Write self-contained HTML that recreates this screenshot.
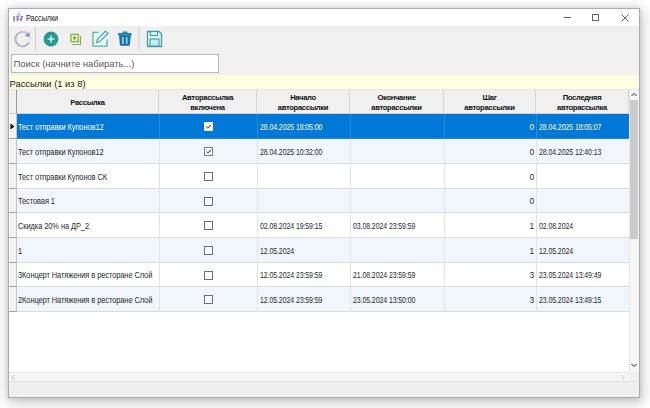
<!DOCTYPE html>
<html><head><meta charset="utf-8">
<style>
*{margin:0;padding:0;box-sizing:border-box}
html,body{width:650px;height:408px;overflow:hidden;background:#fff;font-family:"Liberation Sans",sans-serif}
.abs{position:absolute}
#win{position:absolute;left:8px;top:8px;width:632px;height:390px;border:1px solid #acacac;background:#f0f0f0;box-shadow:0 0 3px rgba(0,0,0,0.1),1px 3px 12px 1px rgba(0,0,0,0.26)}
#title{position:absolute;left:0;top:0;width:630px;height:17px;background:#fff}
#title .t{position:absolute;left:16.8px;top:4px;font-size:8.5px;color:#1a1a1a;letter-spacing:-0.1px;transform:scaleX(0.86);transform-origin:0 50%}
#search{position:absolute;left:2px;top:45px;width:208px;height:19px;border:1px solid #bababa;background:#fff}
#search span{position:absolute;left:1.5px;top:3px;font-size:9.5px;color:#5a5a5a;letter-spacing:-0.05px;white-space:nowrap}
#ybar{position:absolute;left:0;top:66px;width:630px;height:15px;background:#fdfee0;border-bottom:1px solid #e8e8e0}
#ybar span{position:absolute;left:0.5px;top:3px;font-size:9.4px;color:#222;white-space:nowrap}
#grid{position:absolute;left:0;top:81px;width:620px;height:282px;background:#fff}
#hs{position:absolute;left:0;top:363px;width:620px;height:12px;background:#f4f4f4}
.hdr{position:absolute;top:0;height:24px;background:#f0f0f0;border-right:1px solid #d5d5d5;border-bottom:1px solid #d0d0d0;font-weight:bold;font-size:7.6px;color:#111;text-align:center;line-height:10px;padding-top:3px;letter-spacing:-0.32px}
.row{position:absolute;left:0;width:620px;height:25px}
.tx{display:inline-block;transform-origin:0 50%}
.cell{position:absolute;top:0;height:25px;border-right:1px solid #e3e3e3;border-bottom:1px solid #dcdcdc;font-size:8.3px;color:#2a2a2a;white-space:nowrap;line-height:24px;letter-spacing:-0.1px;overflow:hidden}
.rh{position:absolute;left:0;width:8px;height:25px;background:#f3f3f3;border-right:1px solid #c6c6c6;border-bottom:1px solid #a4a4a4;box-shadow:inset 1px 0 0 #fff}
.sel .cell{background:#0078d7;color:#fff;border-color:#2a8ae0}
.alt .cell{background:#f1f5fc}
.cb{position:absolute;left:45px;top:8px;width:9px;height:9px;border:1px solid #555;background:#fff}
#vs{position:absolute;left:620px;top:81px;width:10px;height:282px;background:#f6f6f6}
#hs{position:absolute;left:0;top:363px;width:620px;height:9px;background:#f5f5f5;border-top:1px solid #ebebeb}
</style></head><body>
<div id="win">
  <div id="title">
    <svg class="abs" style="left:3px;top:2px" width="12" height="12" viewBox="0 0 12 12">
      <path d="M4 5.5 L6.8 1 L9.6 5.5 Z" fill="#c4b6d2"/>
      <rect x="3.2" y="4.2" width="8" height="6.8" rx="2" fill="#ece4f4"/>
      <rect x="1.3" y="5" width="1.4" height="5.5" fill="#7c7c7c"/>
      <circle cx="5.6" cy="5.8" r="1.1" fill="#7d63a6"/>
      <circle cx="10" cy="5.9" r="1.1" fill="#8a74ac"/>
      <circle cx="5.6" cy="8.4" r="1.1" fill="#7d63a6"/>
      <circle cx="9" cy="8.4" r="1.1" fill="#7d63a6"/>
    </svg>
    <span class="t">Рассылки</span>
    <div class="abs" style="left:555px;top:8px;width:7px;height:1px;background:#666"></div>
    <div class="abs" style="left:583px;top:5px;width:7px;height:7px;border:1px solid #666"></div>
    <svg class="abs" style="left:612px;top:5px" width="8" height="8" viewBox="0 0 8 8"><path d="M0.5 0.5 L7.5 7.5 M7.5 0.5 L0.5 7.5" stroke="#555" stroke-width="0.9"/></svg>
  </div>
  <!-- toolbar -->
  <svg class="abs" style="left:0;top:17px" width="160" height="28" viewBox="0 0 160 28">
    <!-- refresh -->
    <path d="M19.9 16.5 A7.2 7.2 0 0 0 18.8 8.2" fill="none" stroke="#ecdcf4" stroke-width="2"/>
    <path d="M18.8 8.2 A7.2 7.2 0 1 0 19.9 16.5" fill="none" stroke="#abb6c5" stroke-width="1.9"/>
    <path d="M12.5 5.9 A7.2 7.2 0 0 1 18.8 8.2" fill="none" stroke="#d6bde8" stroke-width="1.9"/>
    <path d="M20.8 6.3 L20.2 11.2 L15.8 9.6 Z" fill="#9a7cc8"/>
    <rect x="26" y="1" width="1" height="24" fill="#cfcfcf"/>
    <!-- add -->
    <circle cx="42" cy="13" r="7.4" fill="#2a9890"/>
    <path d="M42 9.6 V16.4 M38.6 13 H45.4" stroke="#b8fbf6" stroke-width="1.6"/>
    <!-- copy -->
    <path d="M71.5 10 V18.5 H63" fill="none" stroke="#8aa860" stroke-width="1.2"/>
    <rect x="61.9" y="8.3" width="7.4" height="7.4" fill="#e2f5b6" stroke="#90ad50" stroke-width="1.3"/>
    <path d="M65.6 10.2 V13.8 M63.8 12 H67.4" stroke="#6f8f3a" stroke-width="1.1"/>
    <!-- edit -->
    <rect x="84" y="6.5" width="14" height="13.5" fill="#e6fbfa"/>
    <path d="M89.5 6.4 H84 V20.2 H98 V13.5" fill="none" stroke="#5fb0ab" stroke-width="1.3"/>
    <path d="M87.6 16.6 L88.4 13.2 L96.6 5 L99 7.4 L90.8 15.6 Z" fill="#cdf6f3" stroke="#4f9f9a" stroke-width="1.1"/>
    <!-- trash -->
    <rect x="113.3" y="5.6" width="5.4" height="2" rx="0.8" fill="#2a8cae"/>
    <rect x="108.8" y="7" width="14" height="2.4" rx="1" fill="#2a88b0"/>
    <path d="M110 9.2 H121.8 L120.9 18.8 Q120.7 19.8 119.7 19.8 H112.1 Q111.1 19.8 110.9 18.8 Z" fill="#1b6fa4"/>
    <rect x="113" y="11" width="1.6" height="7" fill="#80e4ff"/>
    <rect x="116.9" y="11" width="1.6" height="7" fill="#80e4ff"/>
    <rect x="129.5" y="1" width="1" height="24" fill="#cfcfcf"/>
    <!-- save -->
    <path d="M138.5 5.5 H150 L152.5 8 V20.5 H138.5 Z" fill="#d8f8f8" stroke="#4a9aa5" stroke-width="1.3"/>
    <rect x="141.5" y="5.5" width="7" height="4" fill="#d8f8f8" stroke="#4a9aa5" stroke-width="1.1"/>
    <rect x="141" y="13" width="9" height="7" fill="#bdf2f2" stroke="#4a9aa5" stroke-width="1.1"/>
  </svg>
  <div id="search"><span>Поиск (начните набирать...)</span></div>
  <div id="ybar"><span>Рассылки (1 из 8)</span></div>
  <div id="grid">
    <div class="hdr" style="left:0;width:8px;border-right:1px solid #9a9a9a"></div>
    <div class="hdr" style="left:8px;width:142px;padding-top:8px">Рассылка</div>
    <div class="hdr" style="left:150px;width:98px">Авторассылка<br>включена</div>
    <div class="hdr" style="left:248px;width:93px">Начало<br>авторассылки</div>
    <div class="hdr" style="left:341px;width:94px">Окончание<br>авторассылки</div>
    <div class="hdr" style="left:435px;width:92px">Шаг<br>авторассылки</div>
    <div class="hdr" style="left:527px;width:93px">Последняя<br>авторассылка</div>
    <!-- rows -->
    <div class="row sel" style="top:24px;height:25px"><div class="rh" style="height:25px"><svg class="abs" style="left:1px;top:9px" width="5" height="7"><path d="M0.5 0.5 L4.5 3.5 L0.5 6.5 Z" fill="#000"/></svg></div><div class="cell" style="left:8px;width:143px;height:25px;line-height:26px;padding-left:1px"><span class="tx" style="transform:scaleX(0.9);letter-spacing:-0.1px">Тест отправки Купонов12</span></div><div class="cell" style="left:151px;width:98px;height:25px;line-height:26px;padding-left:2px"><svg class="abs" style="left:44px;top:8px" width="9" height="9"><rect x="0.5" y="0.5" width="8" height="8" fill="#fff" stroke="#e8f2fc"/><path d="M2.2 4.6 L3.8 6.1 L6.8 2.9" fill="none" stroke="#333" stroke-width="1"/></svg></div><div class="cell" style="left:249px;width:93px;height:25px;line-height:26px;padding-left:2px"><span class="tx" style="transform:scaleX(0.84);letter-spacing:-0.1px">28.04.2025 18:05:00</span></div><div class="cell" style="left:342px;width:94px;height:25px;line-height:26px;padding-left:2px"></div><div class="cell" style="left:436px;width:92px;height:25px;line-height:26px;text-align:right;padding-right:2px"><span>0</span></div><div class="cell" style="left:528px;width:93px;height:25px;line-height:26px;padding-left:2px"><span class="tx" style="transform:scaleX(0.84);letter-spacing:-0.1px">28.04.2025 18:05:07</span></div></div>
<div class="row alt" style="top:49px;height:25px"><div class="rh" style="height:25px"></div><div class="cell" style="left:8px;width:143px;height:25px;line-height:26px;padding-left:1px"><span class="tx" style="transform:scaleX(0.9);letter-spacing:-0.1px">Тест отправки Купонов12</span></div><div class="cell" style="left:151px;width:98px;height:25px;line-height:26px;padding-left:2px"><svg class="abs" style="left:44px;top:8px" width="9" height="9"><rect x="0.5" y="0.5" width="8" height="8" fill="#fff" stroke="#808080"/><path d="M2.2 4.6 L3.8 6.1 L6.8 2.9" fill="none" stroke="#333" stroke-width="1"/></svg></div><div class="cell" style="left:249px;width:93px;height:25px;line-height:26px;padding-left:2px"><span class="tx" style="transform:scaleX(0.84);letter-spacing:-0.1px">28.04.2025 10:32:00</span></div><div class="cell" style="left:342px;width:94px;height:25px;line-height:26px;padding-left:2px"></div><div class="cell" style="left:436px;width:92px;height:25px;line-height:26px;text-align:right;padding-right:2px"><span>0</span></div><div class="cell" style="left:528px;width:93px;height:25px;line-height:26px;padding-left:2px"><span class="tx" style="transform:scaleX(0.84);letter-spacing:-0.1px">28.04.2025 12:40:13</span></div></div>
<div class="row" style="top:74px;height:25px"><div class="rh" style="height:25px"></div><div class="cell" style="left:8px;width:143px;height:25px;line-height:26px;padding-left:1px"><span class="tx" style="transform:scaleX(0.9);letter-spacing:-0.1px">Тест отправки Купонов СК</span></div><div class="cell" style="left:151px;width:98px;height:25px;line-height:26px;padding-left:2px"><svg class="abs" style="left:44px;top:8px" width="9" height="9"><rect x="0.5" y="0.5" width="8" height="8" fill="#fff" stroke="#707070"/></svg></div><div class="cell" style="left:249px;width:93px;height:25px;line-height:26px;padding-left:2px"></div><div class="cell" style="left:342px;width:94px;height:25px;line-height:26px;padding-left:2px"></div><div class="cell" style="left:436px;width:92px;height:25px;line-height:26px;text-align:right;padding-right:2px"><span>0</span></div><div class="cell" style="left:528px;width:93px;height:25px;line-height:26px;padding-left:2px"></div></div>
<div class="row alt" style="top:99px;height:24px"><div class="rh" style="height:24px"></div><div class="cell" style="left:8px;width:143px;height:24px;line-height:25px;padding-left:1px"><span class="tx" style="transform:scaleX(0.9);letter-spacing:-0.1px">Тестовая 1</span></div><div class="cell" style="left:151px;width:98px;height:24px;line-height:25px;padding-left:2px"><svg class="abs" style="left:44px;top:8px" width="9" height="9"><rect x="0.5" y="0.5" width="8" height="8" fill="#fff" stroke="#707070"/></svg></div><div class="cell" style="left:249px;width:93px;height:24px;line-height:25px;padding-left:2px"></div><div class="cell" style="left:342px;width:94px;height:24px;line-height:25px;padding-left:2px"></div><div class="cell" style="left:436px;width:92px;height:24px;line-height:25px;text-align:right;padding-right:2px"><span>0</span></div><div class="cell" style="left:528px;width:93px;height:24px;line-height:25px;padding-left:2px"></div></div>
<div class="row" style="top:123px;height:25px"><div class="rh" style="height:25px"></div><div class="cell" style="left:8px;width:143px;height:25px;line-height:26px;padding-left:1px"><span class="tx" style="transform:scaleX(0.9);letter-spacing:-0.1px">Скидка 20% на ДР_2</span></div><div class="cell" style="left:151px;width:98px;height:25px;line-height:26px;padding-left:2px"><svg class="abs" style="left:44px;top:8px" width="9" height="9"><rect x="0.5" y="0.5" width="8" height="8" fill="#fff" stroke="#707070"/></svg></div><div class="cell" style="left:249px;width:93px;height:25px;line-height:26px;padding-left:2px"><span class="tx" style="transform:scaleX(0.84);letter-spacing:-0.1px">02.08.2024 19:59:15</span></div><div class="cell" style="left:342px;width:94px;height:25px;line-height:26px;padding-left:2px"><span class="tx" style="transform:scaleX(0.84);letter-spacing:-0.1px">03.08.2024 23:59:59</span></div><div class="cell" style="left:436px;width:92px;height:25px;line-height:26px;text-align:right;padding-right:2px"><span>1</span></div><div class="cell" style="left:528px;width:93px;height:25px;line-height:26px;padding-left:2px"><span class="tx" style="transform:scaleX(0.84);letter-spacing:-0.1px">02.08.2024</span></div></div>
<div class="row alt" style="top:148px;height:25px"><div class="rh" style="height:25px"></div><div class="cell" style="left:8px;width:143px;height:25px;line-height:26px;padding-left:1px"><span class="tx" style="transform:scaleX(0.9);letter-spacing:-0.1px">1</span></div><div class="cell" style="left:151px;width:98px;height:25px;line-height:26px;padding-left:2px"><svg class="abs" style="left:44px;top:8px" width="9" height="9"><rect x="0.5" y="0.5" width="8" height="8" fill="#fff" stroke="#707070"/></svg></div><div class="cell" style="left:249px;width:93px;height:25px;line-height:26px;padding-left:2px"><span class="tx" style="transform:scaleX(0.84);letter-spacing:-0.1px">12.05.2024</span></div><div class="cell" style="left:342px;width:94px;height:25px;line-height:26px;padding-left:2px"></div><div class="cell" style="left:436px;width:92px;height:25px;line-height:26px;text-align:right;padding-right:2px"><span>1</span></div><div class="cell" style="left:528px;width:93px;height:25px;line-height:26px;padding-left:2px"><span class="tx" style="transform:scaleX(0.84);letter-spacing:-0.1px">12.05.2024</span></div></div>
<div class="row" style="top:173px;height:24px"><div class="rh" style="height:24px"></div><div class="cell" style="left:8px;width:143px;height:24px;line-height:25px;padding-left:1px"><span class="tx" style="transform:scaleX(0.9);letter-spacing:-0.1px">3Концерт Натяжения в ресторане Слой</span></div><div class="cell" style="left:151px;width:98px;height:24px;line-height:25px;padding-left:2px"><svg class="abs" style="left:44px;top:8px" width="9" height="9"><rect x="0.5" y="0.5" width="8" height="8" fill="#fff" stroke="#707070"/></svg></div><div class="cell" style="left:249px;width:93px;height:24px;line-height:25px;padding-left:2px"><span class="tx" style="transform:scaleX(0.84);letter-spacing:-0.1px">12.05.2024 23:59:59</span></div><div class="cell" style="left:342px;width:94px;height:24px;line-height:25px;padding-left:2px"><span class="tx" style="transform:scaleX(0.84);letter-spacing:-0.1px">21.08.2024 23:59:59</span></div><div class="cell" style="left:436px;width:92px;height:24px;line-height:25px;text-align:right;padding-right:2px"><span>3</span></div><div class="cell" style="left:528px;width:93px;height:24px;line-height:25px;padding-left:2px"><span class="tx" style="transform:scaleX(0.84);letter-spacing:-0.1px">23.05.2024 13:49:49</span></div></div>
<div class="row alt" style="top:197px;height:25px"><div class="rh" style="height:25px"></div><div class="cell" style="left:8px;width:143px;height:25px;line-height:26px;padding-left:1px"><span class="tx" style="transform:scaleX(0.9);letter-spacing:-0.1px">2Концерт Натяжения в ресторане Слой</span></div><div class="cell" style="left:151px;width:98px;height:25px;line-height:26px;padding-left:2px"><svg class="abs" style="left:44px;top:8px" width="9" height="9"><rect x="0.5" y="0.5" width="8" height="8" fill="#fff" stroke="#707070"/></svg></div><div class="cell" style="left:249px;width:93px;height:25px;line-height:26px;padding-left:2px"><span class="tx" style="transform:scaleX(0.84);letter-spacing:-0.1px">12.05.2024 23:59:59</span></div><div class="cell" style="left:342px;width:94px;height:25px;line-height:26px;padding-left:2px"><span class="tx" style="transform:scaleX(0.84);letter-spacing:-0.1px">23.05.2024 13:50:00</span></div><div class="cell" style="left:436px;width:92px;height:25px;line-height:26px;text-align:right;padding-right:2px"><span>3</span></div><div class="cell" style="left:528px;width:93px;height:25px;line-height:26px;padding-left:2px"><span class="tx" style="transform:scaleX(0.84);letter-spacing:-0.1px">23.05.2024 13:49:15</span></div></div>
  </div>
  <div id="vs">
    <svg class="abs" style="left:0;top:0" width="10" height="282">
      <rect x="0" y="0" width="1" height="282" fill="#e8e8e8"/><rect x="1" y="10" width="8" height="139" fill="#cbcbcb"/>
      <path d="M2.5 6 L5 3.5 L7.5 6" fill="none" stroke="#333" stroke-width="1"/>
      <path d="M2.5 274 L5 276.5 L7.5 274" fill="none" stroke="#333" stroke-width="1"/>
    </svg>
  </div>
  <div id="hs">
    <svg class="abs" style="left:0;top:0" width="620" height="12">
      <path d="M5.5 2 L3 4.5 L5.5 7" fill="none" stroke="#b8b8b8" stroke-width="1"/>
      <path d="M612.5 2 L615 4.5 L612.5 7" fill="none" stroke="#c8c8c8" stroke-width="1"/>
    </svg>
  </div>
  <div class="abs" style="left:0;top:372px;width:630px;height:16px;background:#efefef;border-top:1px solid #e2e2e2"></div>
</div>
</body></html>
